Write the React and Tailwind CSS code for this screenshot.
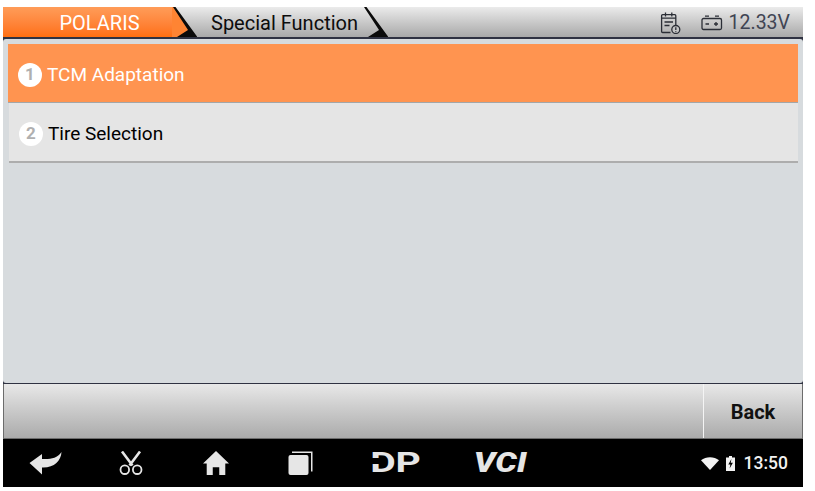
const FONT = "font-['Roboto','Liberation_Sans',sans-serif]";

const TabEdge = ({ fill }) => (
  <svg width="26" height="30" viewBox="0 0 26 30" className="shrink-0">
    <polygon points="0,0 2,0 24,30 0,30" fill={fill} />
    <polygon points="1,0 3.500,0 25,29.500 25,30 5,30 16,23" fill="#0b0b0b" />
  </svg>
);

const CalendarAlert = () => (
  <svg width="22" height="22" viewBox="0 0 22 22" fill="none" stroke="#2b2e36" strokeWidth="1.300">
    <path d="M10.500 20.500H2.600a1 1 0 0 1-1-1V3.700a1 1 0 0 1 1-1h12.200a1 1 0 0 1 1 1V13" />
    <path d="M5.500 .5v4M11.800 .5v4M1.600 6.200h14.200M4.500 10h8.500M4.500 13.500h5" />
    <circle cx="15.800" cy="17.500" r="4" fill="#c4c4c4" />
    <path d="M15.800 15.300v2.800M15.800 18.900v.9" />
  </svg>
);

const BatteryIcon = () => (
  <svg width="22" height="16" viewBox="0 0 22 16" fill="none" stroke="#2b2e36" strokeWidth="1.300">
    <rect x="1" y="3.500" width="19.500" height="11" rx="1.500" />
    <path d="M4 1.200h4M14 1.200h4M4.500 9h3.500M13 9h4M15 7v4" />
  </svg>
);

const BackArrow = () => (
  <svg width="33" height="23" viewBox="0 0 33 23" fill="#e6e6e6">
    <path d="M0.500 11 13 2v5C21 7.500 28 6.500 32.500 0 32 9 25 16 13 15.500V22.500Z" />
  </svg>
);

const Scissors = () => (
  <svg width="26" height="24" viewBox="0 0 26 24" fill="none" stroke="#e6e6e6">
    <path d="M4 .5 14.500 14.500M22 .5 11.500 14.500" strokeWidth="2.600" />
    <circle cx="6.800" cy="18.700" r="4.300" strokeWidth="1.800" />
    <circle cx="19.200" cy="18.700" r="4.300" strokeWidth="1.800" />
  </svg>
);

const HomeIcon = () => (
  <svg width="28" height="26" viewBox="0 0 30 28" fill="#e6e6e6">
    <path d="M15 1 29 14.500H25V27H18.500V18.500H11.500V27H5V14.500H1Z" />
  </svg>
);

const RecentApps = () => (
  <svg width="25" height="24" viewBox="0 0 25 24" fill="#e6e6e6">
    <rect x="0.500" y="4" width="20" height="20" rx="2" />
    <path d="M4 .5H24.500V20.500H23V2H4Z" />
  </svg>
);

const Wifi = () => (
  <svg width="18" height="13" viewBox="0 0 18 13" fill="#f2f2f2">
    <path d="M0 3.200C5-.8 13-.8 18 3.200L9 13Z" />
  </svg>
);

const ChargingBattery = () => (
  <svg width="9" height="15" viewBox="0 0 9 15">
    <path d="M3 0h3v1.500h3V15H0V1.500h3Z" fill="#f2f2f2" />
    <path d="M5.400 3 2.300 8.500H4.400L3.600 12.500 6.900 6.800H4.700Z" fill="#000" />
  </svg>
);

const MenuRow = ({ num, label, active }) => (
  <div
    className={
      active
        ? 'flex h-[59px] items-center border-b border-[#a3a6a8] bg-[#ff9450] pt-[4px] pl-[10px] text-white'
        : 'ml-px flex h-[60px] items-center border-b-2 border-[#adadad] bg-[#e5e5e5] pt-[4px] pl-[10px] text-black'
    }
  >
    <span className="flex h-[24px] w-[24px] items-center justify-center rounded-full bg-white text-[17px] font-bold text-[#b0b0b0]">
      {num}
    </span>
    <span className="ml-[5px] text-[19px]">{label}</span>
  </div>
);

export default function App() {
  return (
    <div className={`${FONT} h-[491px] w-[815px] overflow-hidden bg-white pt-[7px] pl-[3px]`}>
      <div className="w-[800px]">
        <div className="flex h-[30px] bg-gradient-to-b from-[#ebebeb] to-[#a9a9a9]">
          <div className="flex w-[169px] items-center justify-center bg-gradient-to-b from-[#ff9c58] to-[#ff6f0e] pt-[2px] pl-[24px] text-[20px] text-white">
            POLARIS
          </div>
          <div className="h-[30px] bg-gradient-to-b from-[#ff9c58] to-[#ff6f0e]">
            <div className="bg-gradient-to-b from-[#ebebeb] to-[#a9a9a9]">
              <TabEdge fill="#ff8433" />
            </div>
          </div>
          <div className="flex w-[165px] items-center pt-[2px] pl-[13px] text-[20px] text-[#0c0c0c]">Special Function</div>
          <TabEdge fill="#00000000" />
          <div className="ml-auto flex items-center pt-[2px] pr-[13px]">
            <CalendarAlert />
            <span className="ml-[19px]"><BatteryIcon /></span>
            <span className="ml-[6px] text-[19.500px] text-[#3f4453]">12.33V</span>
          </div>
        </div>

        <div className="bg-[#2f3242] py-[2px] pb-px">
          <div className="h-[344px] rounded-[3px] bg-[#d7dbde] px-[5px] pt-[5px]">
            <MenuRow num="1" label="TCM Adaptation" active />
            <MenuRow num="2" label="Tire Selection" />
          </div>
        </div>

        <div className="flex h-[55px] justify-end border-x border-b border-[#6c6c6c] bg-gradient-to-b from-[#e8e8e8] to-[#ababab]">
          <div className="flex w-[99px] items-center justify-center border-l border-[#f4f4f4] pt-[2px] text-[20px] font-bold text-[#111]">
            Back
          </div>
        </div>

        <div className="flex h-[48px] items-center bg-black">
          <div className="flex w-[85px] justify-center"><BackArrow /></div>
          <div className="flex w-[85px] justify-center"><Scissors /></div>
          <div className="flex w-[85px] justify-center"><HomeIcon /></div>
          <div className="flex w-[85px] justify-center"><RecentApps /></div>
          <div className="flex w-[104px] justify-center">
            <span className="relative scale-x-[1.45] text-[27px] leading-none font-bold text-[#e6e6e6]">
              DP
              <span className="absolute top-[8px] left-[1px] h-[6px] w-[10px] bg-black" />
            </span>
          </div>
          <div className="flex w-[106px] justify-center">
            <span className="scale-x-[1.25] text-[27px] leading-none font-black text-[#e6e6e6] italic">VCI</span>
          </div>
          <div className="ml-auto flex items-center pr-[15px]">
            <Wifi />
            <span className="ml-[7px]"><ChargingBattery /></span>
            <span className="ml-[9px] text-[17.500px] font-medium text-[#f2f2f2]">13:50</span>
          </div>
        </div>
      </div>
    </div>
  );
}
